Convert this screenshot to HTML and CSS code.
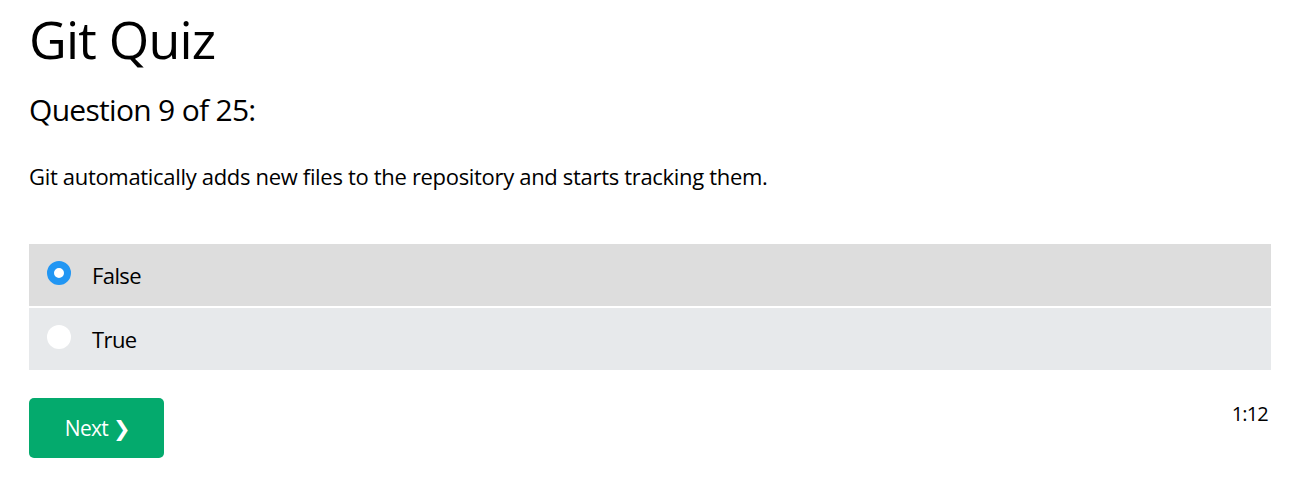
FILE: index.html
```html
<!DOCTYPE html>
<html lang="en">
<head>
<meta charset="utf-8">
<title>Git Quiz</title>
<link rel="stylesheet" href="styles.css">
</head>
<body>
<main class="quiz">
  <h1 class="title">Git Quiz</h1>
  <h2 class="qnum">Question 9 of 25:</h2>
  <p class="qtext">Git automatically adds new files to the repository and starts tracking them.</p>
  <div class="options">
    <label class="opt opt-selected"><span class="radio radio-checked"></span><span class="opt-label">False</span></label>
    <label class="opt"><span class="radio"></span><span class="opt-label">True</span></label>
  </div>
  <div class="footer">
    <button class="next" type="button">Next ❯</button>
    <span class="timer">1:12</span>
  </div>
</main>
</body>
</html>
```
FILE: styles.css
```css
html, body {
  margin: 0;
  padding: 0;
  background: #fff;
}
body {
  font-family: "Open Sans", "Noto Sans", sans-serif;
  color: #000;
}
.quiz {
  padding: 7px 27px 0 29px;
}
.title {
  margin: 0;
  font-size: 52px;
  line-height: 64px;
  font-weight: 400;
  letter-spacing: -0.8px;
}
.qnum {
  margin: 19px 0 0;
  font-size: 30px;
  line-height: 40px;
  font-weight: 400;
  letter-spacing: -0.7px;
}
.qtext {
  margin: 31px 0 0;
  font-size: 22px;
  line-height: 30px;
  letter-spacing: -0.32px;
}
.options {
  margin-top: 53px;
  display: flex;
  flex-direction: column;
  gap: 2px;
}
.opt {
  height: 62px;
  display: flex;
  align-items: center;
  padding-left: 18px;
  background: #e7e9eb;
  font-size: 22px;
  line-height: 30px;
  letter-spacing: -0.6px;
}
.opt-selected {
  background: #dddddd;
}
.radio {
  width: 24px;
  height: 24px;
  border-radius: 50%;
  background: #fff;
  box-sizing: border-box;
  margin-right: 21px;
  margin-bottom: 5px;
  flex: none;
}
.radio-checked {
  border: 7px solid #2196f3;
}
.footer {
  margin-top: 28px;
  display: flex;
  justify-content: space-between;
  align-items: flex-start;
}
.next {
  width: 135px;
  height: 60px;
  border: none;
  border-radius: 5px;
  background: #04aa6d;
  color: #fff;
  font-family: inherit;
  font-size: 21px;
  font-weight: 400;
  letter-spacing: -0.7px;
  padding: 0 0 0 2px;
}
.timer {
  margin-top: 2px;
  margin-right: 3px;
  font-size: 20px;
  line-height: 28px;
  letter-spacing: -0.8px;
}
```
